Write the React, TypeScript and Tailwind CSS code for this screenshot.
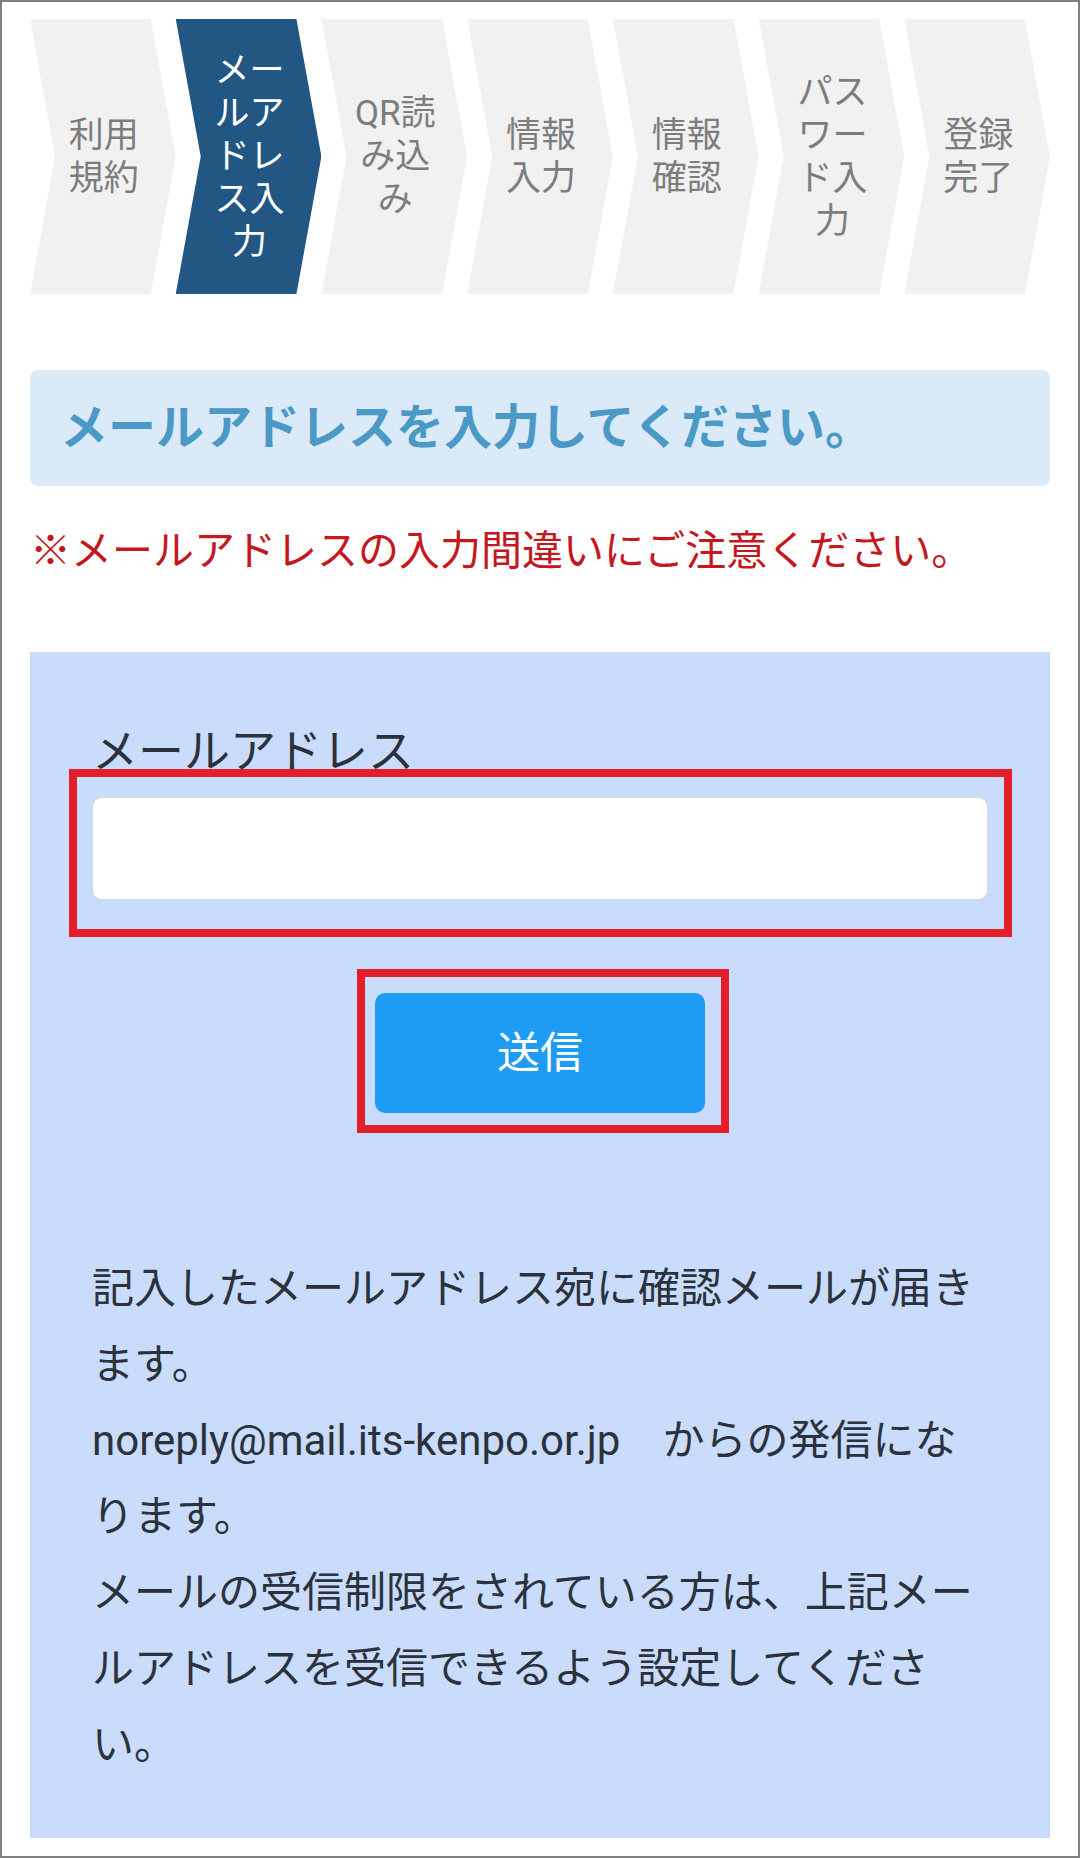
import type { ReactNode } from "react"

const STEPS = [
  { label: "利用規約" },
  { label: "メールアドレス入力", active: true },
  { label: "QR読み込み" },
  { label: "情報入力" },
  { label: "情報確認" },
  { label: "パスワード入力" },
  { label: "登録完了" },
]

const FONT = "font-['Roboto','Noto_Sans_CJK_JP',sans-serif]"

function Step({ label, active }: { label: string; active?: boolean }) {
  return (
    <li
      className={
        "flex flex-1 h-[275px] items-center justify-center [clip-path:polygon(0_0,calc(100%-25px)_0,100%_50%,calc(100%-25px)_100%,0_100%,25px_50%)] " +
        (active ? "bg-[#235783] text-white" : "bg-[#f1f1f1] text-[#7d7d7d]")
      }
    >
      <span className="w-[88px] pl-[2px] text-center text-[35px] leading-[43px] break-all">
        {label}
      </span>
    </li>
  )
}

// annotation frame drawn over a control
function Marked({
  children,
  frame,
}: {
  children: ReactNode
  frame: string
}) {
  return (
    <div className="relative">
      {children}
      <span
        className={
          "pointer-events-none absolute border-[8px] border-[#e41e2a] " + frame
        }
      />
    </div>
  )
}

export default function App() {
  return (
    <div
      className={`w-[1080px] h-[1858px] border-2 border-[#7f7f7f] bg-white px-[28px] pt-[17px] ${FONT}`}
    >
      <ol className="flex">
        {STEPS.map((s) => (
          <Step key={s.label} label={s.label} active={s.active} />
        ))}
      </ol>

      <div className="mt-[76px] flex h-[116px] items-center rounded-[8px] bg-[#dbeaf9] px-[30px]">
        <h2 className="text-[48px] font-bold leading-none text-[#4a99c6]">
          メールアドレスを入力してください。
        </h2>
      </div>

      <p className="mt-[37px] text-[41px] leading-[56px] text-[#c4171e]">
        ※メールアドレスの入力間違いにご注意ください。
      </p>

      <section className="mt-[73px] bg-[#c9dcfb] px-[62px] pt-[68px] pb-[55px]">
        <label className="block text-[46px] leading-[62px] text-[#2c323d]">
          メールアドレス
        </label>

        <div className="mt-[15px]">
          <Marked frame="-left-[23px] -right-[24px] -top-[28px] -bottom-[37px]">
            <input
              type="email"
              className="block h-[103px] w-full rounded-[10px] border border-[#d4d7de] bg-white px-4 text-[40px] outline-none"
            />
          </Marked>
        </div>

        <div className="mt-[93px] flex justify-center">
          <Marked frame="-left-[18px] -right-[24px] -top-[24px] -bottom-[20px]">
            <button className="block h-[120px] w-[330px] rounded-[10px] bg-[#1e9bf2] text-[43px] text-white">
              送信
            </button>
          </Marked>
        </div>

        <hr className="mt-[89px] -mx-[5px] border-0 border-t-2 border-dotted border-[#d5e3fc]" />

        <div className="mt-[47px] text-[42px] leading-[76px] text-[#2c323c]">
          <p>記入したメールアドレス宛に確認メールが届きます。</p>
          <p>noreply@mail.its-kenpo.or.jp　からの発信になります。</p>
          <p>
            メールの受信制限をされている方は、上記メールアドレスを受信できるよう設定してください。
          </p>
        </div>
      </section>
    </div>
  )
}
